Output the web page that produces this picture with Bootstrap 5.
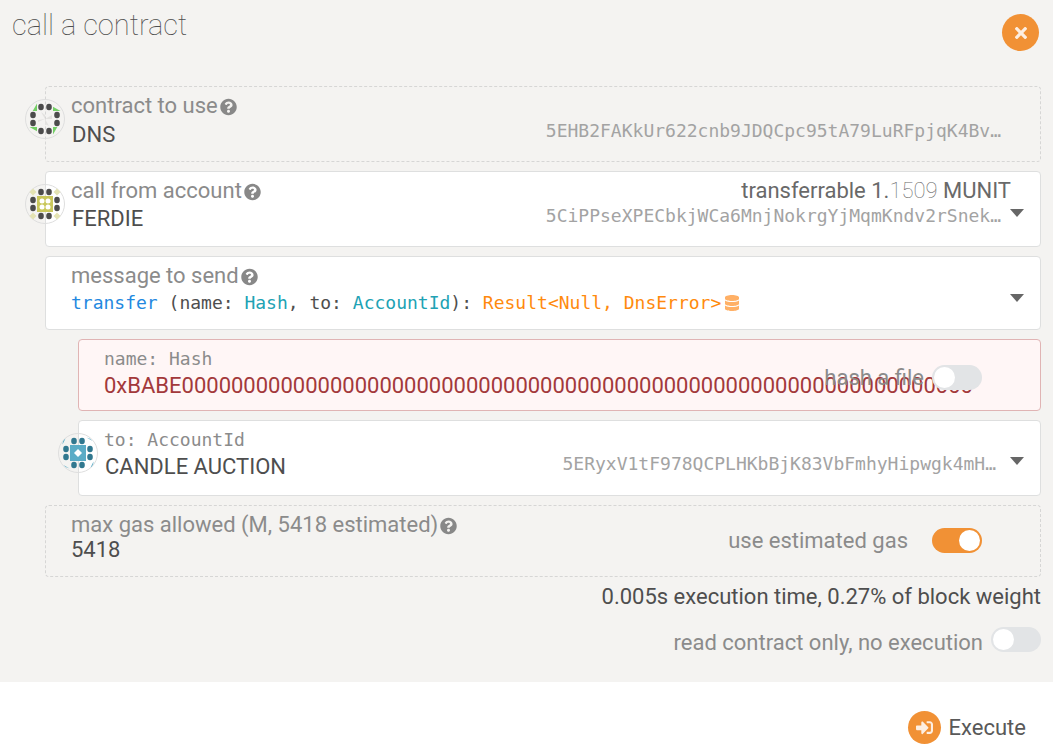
<!DOCTYPE html>
<html lang="en">
<head>
<meta charset="utf-8">
<meta name="viewport" content="width=device-width, initial-scale=1">
<title>call a contract</title>
<link rel="stylesheet" href="https://cdn.jsdelivr.net/npm/bootstrap@5.3.0/dist/css/bootstrap.min.css">
<style>
  :root { --ink: #4e4e4e; --soft: #8b8b8b; --accent: #f19135; --edge: #dedfdf; }
  body { font: 22px/24px Roboto, sans-serif; color: var(--ink); background: #fff; }
  .sheet { background: #f4f3f1; padding: 10px 12px 27px; }
  .title { font-size: 29px; line-height: 30px; font-weight: 100; margin: 0; }
  .round { width: 37px; height: 37px; border-radius: 50%; background: var(--accent); color: #fdeee1; border: 0; padding: 0; margin: 4px 2px 0 0; }
  .fields { display: grid; gap: 9px; margin: 35px 0 0 33px; }
  .field { position: relative; background: #fff; border: 1px solid var(--edge); border-radius: 4px; padding: 7px 0 0 25px; min-height: 76px; }
  .field.is-static { background: transparent; border-style: dashed; border-color: #d6d6d5; }
  .field.is-mid { min-height: 74px; }
  .field.is-low { min-height: 72px; }
  .field.is-inner { margin-left: 33px; }
  .field.is-wrong { background: #fff6f6; border-color: #e0b4b4; }
  .caption { color: var(--soft); white-space: nowrap; }
  .caption svg { display: block; fill: #888; margin: 1px 0 0 2px; }
  .code { font: 18px/24px "DejaVu Sans Mono", monospace; }
  .value { display: grid; }
  .value > * { grid-area: 1 / 1; min-width: 0; }
  .value input, .value select, .value button { appearance: none; border: 0; background: transparent; color: var(--ink); height: 30px; padding: 0 0 0 1px; width: 100%; text-align: left; }
  .value .picker { background: url("data:image/svg+xml,%3Csvg xmlns='http://www.w3.org/2000/svg' viewBox='0 0 14 8'%3E%3Cpath d='M0 0h14L7 8z' fill='%23666'/%3E%3C/svg%3E") no-repeat right 16px top 5px / 14px 8px; }
  .value .tight { height: 28px; padding-left: 0; }
  .value .snug { height: 24px; padding-left: 0; }
  .address { color: #a3a3a3; justify-self: end; margin-right: 39px; pointer-events: none; }
  .is-inner .address { margin-right: 44px; }
  .balance { margin-right: 29px; color: #696969; }
  .balance span { font-weight: 100; }
  .value .wrong-ink { color: #a3393b; }
  .c-name { color: #2288e0; } .c-type { color: #21a2b4; } .c-result { color: #ff8a0d; }
  .avatar { position: absolute; left: -21px; top: 12px; width: 40px; height: 40px; }
  .over { position: absolute; right: 58px; top: 25px; }
  .estimate { padding-right: 58px; }
  .weight { margin: 8px 0 18px; }
  .form-check-input.toggle, .form-check-input.toggle:focus { width: 50px; height: 25px; margin: 0; border: 0; border-radius: 25px; box-shadow: none; background: #e2e4e6 url("data:image/svg+xml,%3Csvg xmlns='http://www.w3.org/2000/svg' viewBox='-50 -50 100 100'%3E%3Ccircle r='42' fill='white'/%3E%3C/svg%3E") no-repeat left center / 25px 25px; }
  .form-check-input.toggle:checked { background-color: var(--accent); background-position: right center; }
  .foot { padding: 29px 27px 6px; }
  .execute { border: 0; background: transparent; color: #595959; padding: 0; }
  .execute .round { width: 33px; height: 33px; margin: 0; }
</style>
</head>
<body>
<svg class="d-none" aria-hidden="true">
  <symbol id="help" viewBox="0 0 512 512"><path d="M504 256c0 136.997-111.043 248-248 248S8 392.997 8 256C8 119.083 119.043 8 256 8s248 111.083 248 248zM262.655 90c-54.497 0-89.255 22.957-116.549 63.758-3.536 5.286-2.353 12.415 2.715 16.258l34.699 26.31c5.205 3.947 12.621 3.008 16.665-2.122 17.864-22.658 30.113-35.797 57.303-35.797 20.429 0 45.698 13.148 45.698 32.958 0 14.976-12.363 22.667-32.534 33.976C247.128 238.528 216 254.941 216 296v4c0 6.627 5.373 12 12 12h56c6.627 0 12-5.373 12-12v-1.333c0-28.462 83.186-29.647 83.186-106.667 0-58.002-60.165-102-116.531-102zM256 338c-25.365 0-46 20.635-46 46 0 25.364 20.635 46 46 46s46-20.636 46-46c0-25.365-20.635-46-46-46z"/></symbol>
  <symbol id="dots" viewBox="-20 -20 40 40" overflow="visible">
    <ellipse cx="-4" cy="-12" rx="2.8" ry="3.3"/><ellipse cx="4" cy="-12" rx="2.8" ry="3.3"/><ellipse cx="-4" cy="12" rx="2.8" ry="3.3"/><ellipse cx="4" cy="12" rx="2.8" ry="3.3"/><ellipse cx="-12" cy="-4" rx="2.8" ry="3.3"/><ellipse cx="-12" cy="4" rx="2.8" ry="3.3"/><ellipse cx="12" cy="-4" rx="2.8" ry="3.3"/><ellipse cx="12" cy="4" rx="2.8" ry="3.3"/>
  </symbol>
</svg>

<main class="sheet">
  <header class="d-flex justify-content-between align-items-start">
    <h1 class="title">call a contract</h1>
    <button type="button" class="round d-flex align-items-center justify-content-center" aria-label="close">
      <svg width="12" height="18" viewBox="0 0 352 512" fill="currentColor"><path d="M242.72 256l100.07-100.07c12.28-12.28 12.28-32.19 0-44.48l-22.24-22.24c-12.28-12.28-32.19-12.28-44.48 0L176 189.28 75.93 89.21c-12.28-12.28-32.19-12.28-44.48 0L9.21 111.45c-12.28 12.28-12.28 32.19 0 44.48L109.28 256 9.21 356.07c-12.28 12.28-12.28 32.19 0 44.48l22.24 22.24c12.28 12.28 32.2 12.28 44.48 0L176 322.72l100.07 100.07c12.28 12.28 32.2 12.28 44.48 0l22.24-22.24c12.28-12.28 12.28-32.19 0-44.48L242.72 256z"/></svg>
    </button>
  </header>

  <div class="fields">
    <div class="field is-static">
      <svg class="avatar" viewBox="-20 -20 40 40"><circle r="19.5" fill="none" stroke="#dedede"/>
        <g fill="#74cf66"><path d="M-12.3-8h4.3v-7.5zM8-12.3V-8h7.5zM12.3 8H8v7.5zM-8 12.3V8h-7.5z"/></g>
        <path d="M0 0l-4-7 4 3zM0 0l7-4v4zM0 0l4 7-4-2zM0 0l-7 3v-2z" fill="#e3e2e0"/>
        <use href="#dots" x="-20" y="-20" width="40" height="40" fill="#4b4b4b"/></svg>
      <div class="caption d-flex"><label for="contract">contract to use</label><svg width="19" height="24" aria-hidden="true"><use href="#help" width="17" height="24"/></svg></div>
      <div class="value"><input id="contract" value="DNS" readonly><span class="address code">5EHB2FAKkUr622cnb9JDQCpc95tA79LuRFpjqK4Bv…</span></div>
    </div>

    <div class="field">
      <svg class="avatar" viewBox="-20 -20 40 40"><circle r="19.5" fill="none" stroke="#dedede"/>
        <path d="M-8-8H8V8H-8z" fill="#c9c75b"/>
        <path d="M-12-15.5l3.5 3.5-3.5 3.5-3.5-3.5zM12-15.5l3.5 3.5-3.5 3.5-3.5-3.5zM-12 8.5l3.5 3.5-3.5 3.5-3.5-3.5zM12 8.5l3.5 3.5-3.5 3.5-3.5-3.5z" fill="#e4e3b3"/>
        <g fill="#fff"><circle cx="-3" cy="-3" r="2.5"/><circle cx="3" cy="-3" r="2.5"/><circle cx="-3" cy="3" r="2.5"/><circle cx="3" cy="3" r="2.5"/></g>
        <use href="#dots" x="-20" y="-20" width="40" height="40" fill="#4b4b4b"/></svg>
      <div class="caption d-flex"><label for="account">call from account</label><svg width="19" height="24" aria-hidden="true"><use href="#help" width="17" height="24"/></svg>
        <div class="balance ms-auto">transferrable 1.<span>1509</span> MUNIT</div></div>
      <div class="value"><select id="account" class="picker"><option>FERDIE</option></select><span class="address code">5CiPPseXPECbkjWCa6MnjNokrgYjMqmKndv2rSnek…</span></div>
    </div>

    <div class="field is-mid">
      <div class="caption d-flex"><span id="message-label">message to send</span><svg width="19" height="24" aria-hidden="true"><use href="#help" width="17" height="24"/></svg></div>
      <div class="value"><button type="button" class="picker tight code text-nowrap d-flex align-items-center" aria-labelledby="message-label message"><span id="message"><span class="c-name">transfer</span> (name: <span class="c-type">Hash</span>, to: <span class="c-type">AccountId</span>): <span class="c-result">Result&lt;Null, DnsError&gt;</span></span><svg class="ms-1" width="14" height="16" viewBox="0 0 448 512" fill="#ffb066"><path d="M448 73.143v45.714C448 159.143 347.667 192 224 192S0 159.143 0 118.857V73.143C0 32.857 100.333 0 224 0s224 32.857 224 73.143zM448 176v102.857C448 319.143 347.667 352 224 352S0 319.143 0 278.857V176c48.125 33.143 136.208 48.572 224 48.572S399.874 209.143 448 176zm0 160v102.857C448 479.143 347.667 512 224 512S0 479.143 0 438.857V336c48.125 33.143 136.208 48.572 224 48.572S399.874 369.143 448 336z"/></svg></button></div>
    </div>

    <div class="field is-inner is-low is-wrong">
      <div class="caption"><label for="hash" class="code d-block">name: Hash</label></div>
      <div class="value"><input id="hash" class="tight wrong-ink" value="0xBABE0000000000000000000000000000000000000000000000000000000000000000"></div>
      <div class="over d-flex align-items-center gap-2"><label for="file" class="caption">hash a file</label><input id="file" type="checkbox" role="switch" class="form-check-input toggle"></div>
    </div>

    <div class="field is-inner">
      <svg class="avatar" viewBox="-20 -20 40 40"><circle r="19.5" fill="none" stroke="#dedede"/>
        <path d="M-8-8H8V8H-8z" fill="#5bacc6"/><path d="M0-4l4 4-4 4-4-4z" fill="#fff"/>
        <path d="M8.5-15.5q4 .5 6 3.5zM15.5 8.5q0 4-3 6zM-8.5 15.5q-4-.5-6-3.5zM-15.5-8.5q0-4 3-6z" fill="#5bacc6"/>
        <use href="#dots" x="-20" y="-20" width="40" height="40" fill="#31788f"/></svg>
      <div class="caption"><label for="target" class="code d-block">to: AccountId</label></div>
      <div class="value"><select id="target" class="picker"><option>CANDLE AUCTION</option></select><span class="address code">5ERyxV1tF978QCPLHKbBjK83VbFmhyHipwgk4mH…</span></div>
    </div>

    <div class="field is-static is-low d-flex justify-content-between">
      <div>
        <div class="caption d-flex"><label for="gas">max gas allowed (M, 5418 estimated)</label><svg width="19" height="24" aria-hidden="true"><use href="#help" width="17" height="24"/></svg></div>
        <div class="value"><input id="gas" class="snug" value="5418"></div>
      </div>
      <div class="estimate d-flex align-items-center mb-2"><label for="estimate" class="caption me-4">use estimated gas</label><input id="estimate" type="checkbox" role="switch" class="form-check-input toggle" checked></div>
    </div>
  </div>

  <p class="weight text-end">0.005s execution time, 0.27% of block weight</p>
  <div class="d-flex justify-content-end align-items-start gap-2"><label for="readonly" class="caption pt-1">read contract only, no execution</label><input id="readonly" type="checkbox" role="switch" class="form-check-input toggle"></div>
</main>

<footer class="foot d-flex justify-content-end">
  <button type="button" class="execute d-flex align-items-center gap-2">
    <span class="round d-flex align-items-center justify-content-center"><svg width="17" height="17" viewBox="0 0 512 512" fill="currentColor"><path d="M416 448h-84c-6.6 0-12-5.4-12-12v-40c0-6.6 5.4-12 12-12h84c17.7 0 32-14.3 32-32V160c0-17.7-14.3-32-32-32h-84c-6.6 0-12-5.4-12-12V76c0-6.6 5.4-12 12-12h84c53 0 96 43 96 96v192c0 53-43 96-96 96zm-47-201L201 79c-15-15-41-4.5-41 17v96H24c-13.3 0-24 10.7-24 24v96c0 13.3 10.7 24 24 24h136v96c0 21.5 26 32 41 17l168-168c9.3-9.4 9.3-24.6 0-34z"/></svg></span>Execute</button>
</footer>
<script src="https://cdn.jsdelivr.net/npm/bootstrap@5.3.0/dist/js/bootstrap.bundle.min.js"></script>
</body>
</html>
